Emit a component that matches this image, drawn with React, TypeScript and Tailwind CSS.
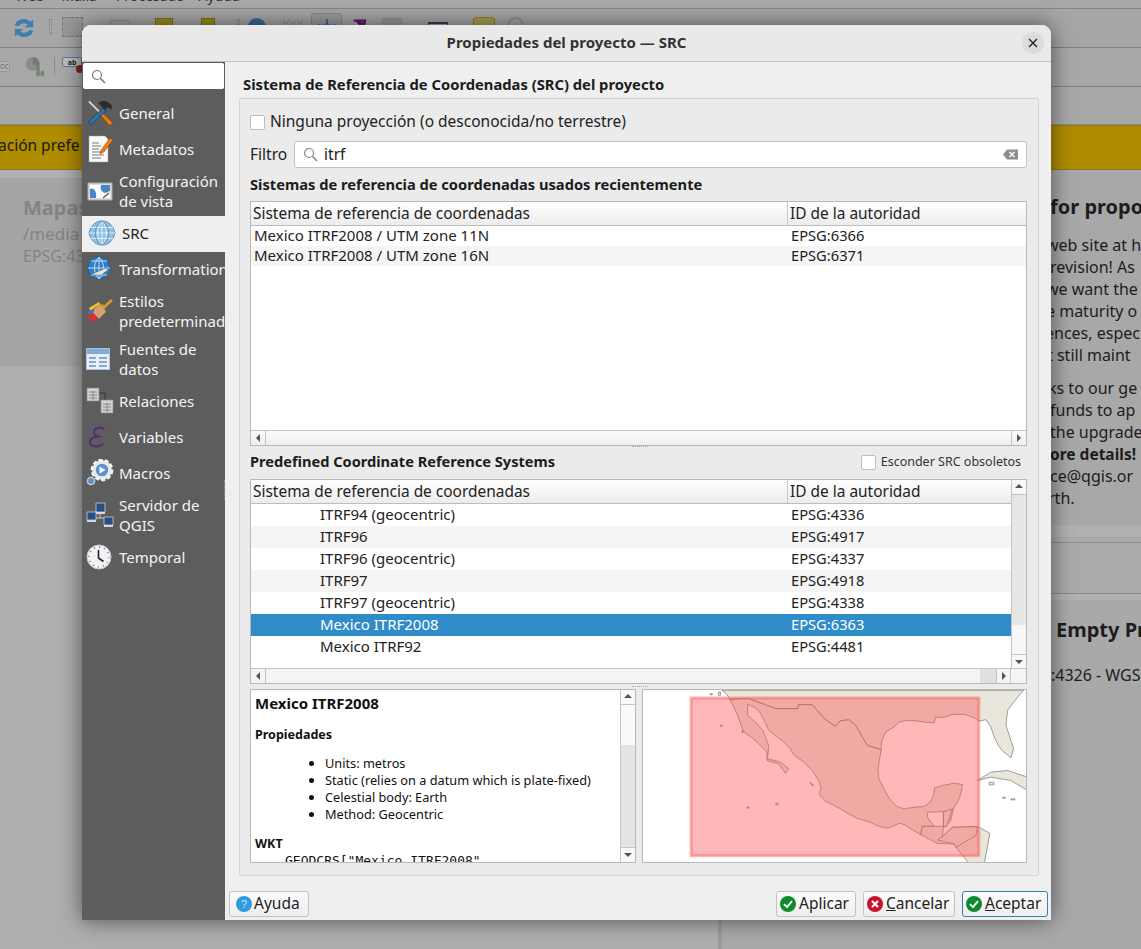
import React from 'react';

const recentRows = [
  ['Mexico ITRF2008 / UTM zone 11N', 'EPSG:6366'],
  ['Mexico ITRF2008 / UTM zone 16N', 'EPSG:6371'],
];

const predefinedRows = [
  ['ITRF94 (geocentric)', 'EPSG:4336'],
  ['ITRF96', 'EPSG:4917'],
  ['ITRF96 (geocentric)', 'EPSG:4337'],
  ['ITRF97', 'EPSG:4918'],
  ['ITRF97 (geocentric)', 'EPSG:4338'],
  ['Mexico ITRF2008', 'EPSG:6363'],
  ['Mexico ITRF92', 'EPSG:4481'],
];

function Hammer() {
  return (
    <svg width="28" height="28" viewBox="0 0 28 28">
      <path d="M2 3l1.5-1.5L16 14l-1.5 1.5z" fill="#d8d8d8" stroke="#555" strokeWidth=".4" />
      <path d="M14 15.5l2-2 10 9.5c1 2-1 4-3 3z" fill="#ee7a12" stroke="#7a3a00" strokeWidth=".6" />
      <path d="M17 9L2 23l3 3L20 12z" fill="#2f6fa8" stroke="#12324f" strokeWidth=".6" />
      <path d="M12 4c4-3 10-3 14 3l-1 4-3-3-3 3-5-5z" fill="#2c2c2c" />
    </svg>
  );
}

function Notepad() {
  return (
    <svg width="28" height="28" viewBox="0 0 28 28">
      <path d="M3 1h16l3 3v23H3z" fill="#fafafa" stroke="#999" strokeWidth=".5" />
      <path d="M6 8h7M6 11h9M6 14h7M6 17h9M6 20h12M6 23h9" stroke="#777" strokeWidth="1" />
      <path d="M24 3l3 2-9 12-4 2 1-4z" fill="#ef7f1a" stroke="#8a4100" strokeWidth=".5" />
    </svg>
  );
}

function MapFrame() {
  return (
    <svg width="28" height="28" viewBox="0 0 28 28">
      <path d="M2 6h24v17H2z" fill="#ddd" stroke="#aaa" />
      <path d="M4 8h20v13H4z" fill="#fdfdfd" />
      <path d="M4 12c4-2 7 3 6 9H4zM15 8h9v6c-3 1-5 3-7 1-2-1-3-4-2-7z" fill="#4a86c6" />
      <path d="M17 21l6-5" stroke="#555" strokeWidth="1.4" />
    </svg>
  );
}

function WireGlobe() {
  return (
    <svg width="28" height="26" viewBox="0 0 28 26">
      <path d="M1 13C3 5 8 1 14 1s11 4 13 12c-2 8-7 12-13 12S3 21 1 13z" fill="#8fc0e6" stroke="#5d8eb6" />
      <path d="M1 13h26M3 7.5h22M3 18.5h22M14 1v24M14 1C8 7 8 19 14 25M14 1c6 6 6 18 0 24" fill="none" stroke="#dff0fb" strokeWidth="1" />
      <path d="M14 1C5 7 5 19 14 25M14 1c9 6 9 18 0 24" fill="none" stroke="#4c7fa8" strokeWidth=".7" />
    </svg>
  );
}

function ArrowGlobe() {
  return (
    <svg width="26" height="26" viewBox="0 0 26 26">
      <circle cx="13" cy="12" r="11" fill="#2f7fc6" stroke="#1f5c94" />
      <path d="M2 12h22M13 1v22M5 5h16M5 19h16M13 1C7 7 7 17 13 23M13 1c6 6 6 16 0 22" fill="none" stroke="#cfe6f7" strokeWidth=".9" />
      <path d="M6 18l14-6 2 2-7 5H8z" fill="#e6e6e6" stroke="#555" strokeWidth=".5" />
    </svg>
  );
}

function Brush() {
  return (
    <svg width="28" height="26" viewBox="0 0 28 26">
      <path d="M3 10l10-6 4 8-10 7z" fill="#e8c81c" />
      <path d="M1 14l8-4 4 6-7 4z" fill="#3f6fc4" />
      <path d="M1 18l6-3 5 5-5 4z" fill="#d43232" />
      <path d="M9 9l8-3 3 8-7 7-6-6z" fill="#d8a070" stroke="#8a6238" strokeWidth=".5" />
      <path d="M17 10L26 2" stroke="#d99a1e" strokeWidth="2.6" />
    </svg>
  );
}

function DataTable() {
  return (
    <svg width="24" height="22" viewBox="0 0 24 22">
      <path d="M.5.5h23v21H.5z" fill="#e8f1fa" stroke="#a9c4df" />
      <path d="M1 1h22v5H1z" fill="#7fabd6" />
      <path d="M3 9h7v2H3zM13 9h8v2h-8zM3 13h7v2H3zM13 13h8v2h-8zM3 17h7v2H3zM13 17h8v2h-8z" fill="#86a9cc" />
    </svg>
  );
}

function Relations() {
  return (
    <svg width="28" height="28" viewBox="0 0 28 28">
      <path d="M13 6h6v8" fill="none" stroke="#2a3a55" strokeWidth="1" />
      <path d="M1 1h12v13H1zM15 13h12v13H15z" fill="#d2d2d2" stroke="#8a8a8a" strokeWidth=".7" />
      <path d="M3 5h8M3 8h8M3 11h8M17 17h8M17 20h8M17 23h8M7 4v9M21 16v9" stroke="#777" strokeWidth=".8" />
    </svg>
  );
}

function Epsilon() {
  return (
    <svg width="24" height="24" viewBox="0 0 24 24">
      <path d="M18 4c-5-2.5-10-1-10 3 0 3 3 4.500 6 4.500-5 0-10 1.500-10 5.500 0 5 8 6 13 2" fill="none" stroke="#5b2a78" strokeWidth="2.2" />
      <path d="M7 11.5h9" stroke="#5b2a78" strokeWidth="1" />
    </svg>
  );
}

function Gears() {
  return (
    <svg width="28" height="28" viewBox="0 0 28 28">
      <circle cx="16" cy="11" r="10" fill="#e4e4e4" stroke="#f4f4f4" strokeWidth="2.6" strokeDasharray="4 2.2" />
      <circle cx="16" cy="11" r="7" fill="#5b93cf" stroke="#eee" strokeWidth="1.4" />
      <path d="M13.5 7.5l6 3.5-6 3.5z" fill="#fff" />
      <circle cx="5" cy="22" r="3.6" fill="#5b93cf" stroke="#ccc" strokeWidth="1.4" />
    </svg>
  );
}

function Servers() {
  return (
    <svg width="28" height="26" viewBox="0 0 28 26">
      <path d="M14 10v6M6 16h16" stroke="#ccc" strokeWidth="1" />
      <path d="M10 1h9v9h-9zM1 10h9v8H1zM18 15h9v8h-9z" fill="#234f86" stroke="#cfcfcf" strokeWidth=".8" />
      <path d="M10 10h9v2h-9zM1 18h9v2H1zM18 23h9v2h-9z" fill="#d8d8d8" />
    </svg>
  );
}

function Clock() {
  return (
    <svg width="26" height="26" viewBox="0 0 26 26">
      <circle cx="13" cy="13" r="12" fill="#f2f2f2" stroke="#c8c8c8" />
      <circle cx="13" cy="13" r="10" fill="none" stroke="#4e8fd1" strokeWidth="1.4" strokeDasharray="1.3 3.9" />
      <path d="M12.5 6v8l5 3.5" fill="none" stroke="#222" strokeWidth="1.6" />
    </svg>
  );
}

const sidebarItems: { label: string[]; icon: React.ReactNode; active?: boolean }[] = [
  { label: ['General'], icon: <Hammer /> },
  { label: ['Metadatos'], icon: <Notepad /> },
  { label: ['Configuración', 'de vista'], icon: <MapFrame /> },
  { label: ['SRC'], icon: <WireGlobe />, active: true },
  { label: ['Transformations'], icon: <ArrowGlobe /> },
  { label: ['Estilos', 'predeterminados'], icon: <Brush /> },
  { label: ['Fuentes de', 'datos'], icon: <DataTable /> },
  { label: ['Relaciones'], icon: <Relations /> },
  { label: ['Variables'], icon: <Epsilon /> },
  { label: ['Macros'], icon: <Gears /> },
  { label: ['Servidor de', 'QGIS'], icon: <Servers /> },
  { label: ['Temporal'], icon: <Clock /> },
];

function Search({ color = '#777' }: { color?: string }) {
  return (
    <svg width="15" height="15" viewBox="0 0 15 15" fill="none">
      <circle cx="6" cy="6" r="4.5" stroke={color} strokeWidth="1.2" />
      <path d="M9.5 9.5l4.5 4.5" stroke={color} strokeWidth="1.6" />
    </svg>
  );
}

function ArrowButton({ dir, className }: { dir: 'up' | 'down' | 'left' | 'right'; className: string }) {
  const points = {
    up: '1,6 5,2 9,6',
    down: '1,3 5,7 9,3',
    left: '7,1 3,5 7,9',
    right: '3,1 7,5 3,9',
  }[dir];
  return (
    <div className={`flex shrink-0 items-center justify-center ${className}`}>
      <svg width="10" height="10" viewBox="0 0 10 10">
        <polygon points={points} fill="#555" />
      </svg>
    </div>
  );
}

function Checkbox() {
  return <div className="h-[15px] w-[15px] shrink-0 rounded-[2px] border border-[#bdbdbd] bg-white" />;
}

function TableHeader() {
  return (
    <div className="flex h-[24px] shrink-0 items-center border-b border-[#bdbdbd] bg-gradient-to-b from-white to-[#ececec] text-[15.45px] text-[#222]">
      <div className="flex h-full w-[537px] shrink-0 items-center border-r border-[#c8c8c8] pl-[2px]">Sistema de referencia de coordenadas</div>
      <div className="pl-[2px]">ID de la autoridad</div>
    </div>
  );
}

function RoundIcon({ kind }: { kind: 'ok' | 'no' | 'help' }) {
  const bg = { ok: '#108a2c', no: '#c8132f', help: '#319bdd' }[kind];
  return (
    <svg width="16" height="16" viewBox="0 0 16 16" className="shrink-0">
      <circle cx="8" cy="8" r="8" fill={bg} />
      {kind === 'ok' && <path d="M4 8.2l3 3 5-6" fill="none" stroke="#fff" strokeWidth="1.9" />}
      {kind === 'no' && <path d="M5 5l6 6M11 5l-6 6" fill="none" stroke="#fff" strokeWidth="1.9" />}
      {kind === 'help' && (
        <text x="8" y="12" textAnchor="middle" fontSize="11" fill="#cfe8f8" fontFamily="Liberation Sans, sans-serif">
          ?
        </text>
      )}
    </svg>
  );
}

function DialogButton({ kind, className, accent, children }: { kind: 'ok' | 'no' | 'help'; className: string; accent?: boolean; children: React.ReactNode }) {
  return (
    <button
      className={`flex h-[26px] items-center rounded-[3px] border bg-gradient-to-b from-[#fbfbfb] to-[#eeeeee] text-[15.5px] text-[#222] ${
        accent ? 'border-[#3a80ac]' : 'border-[#c2c2c2]'
      } ${className}`}
    >
      <RoundIcon kind={kind} />
      <span className="pb-px">{children}</span>
    </button>
  );
}

function MapPreview() {
  return (
    <svg width="385" height="174" viewBox="9 30 1152 519" className="block">
      <rect x="9" y="30" width="1152" height="519" fill="#fff" />
      <g fill="#e9e7dc" stroke="#66665c" strokeWidth="1.8" strokeLinejoin="round">
        <path d="M245 30L258 40 270 58 322 54 407 85 472 85 475 73 515 73 555 118 585 138 598 122 625 118 645 135 680 195 722 208 722 185 735 155 760 140 775 125 800 120 830 122 850 125 880 128 885 110 905 112 935 102 970 102 1000 112 1015 122 1035 118 1050 140 1060 170 1072 195 1085 212 1110 232 1118 205 1105 165 1095 135 1100 90 1130 50 1148 30z" />
        <path d="M270 58L322 54 407 85 472 85 475 73 515 73 555 118 585 138 598 122 625 118 645 135 680 195 722 208 717 235 712 270 715 295 735 335 750 360 770 378 790 385 820 380 850 378 868 365 878 345 882 322 905 315 940 308 965 312 960 340 950 365 940 378 935 395 930 420 915 437 908 437 908 393 860 395 860 410 880 437 845 437 840 462 815 447 790 432 775 428 755 438 738 443 710 435 690 425 650 413 625 400 600 385 575 372 555 362 535 340 542 325 535 300 515 270 490 245 460 222 450 205 430 185 405 165 385 150 372 120 358 95 345 82 322 72 322 105 345 125 368 150 385 195 382 235 420 245 445 265 435 278 415 250 380 240 380 215 340 175 310 155 290 100z" />
        <path d="M840 462L845 437 880 437 908 437 905 468 935 440 1010 438 1047 458 1030 549 985 549 950 505 940 490 890 488z" />
        <path d="M908 393L935 385 918 437 908 437z" />
        <path d="M905 468L890 478 940 490 945 500 970 485 1005 465 1010 438 935 440z" />
        <path d="M1010 300L1050 275 1100 270 1160 290 1160 330 1110 300 1050 290z" />
        <path d="M1045 305h14v8h-14zM508 305l12 10-4 1zM405 370l8-2-1 6zM240 134h6v4h-6zM305 152h4v4h-4zM210 40h6v4h-6zM235 35h6v10h-6zM320 380h6v3h-6zM1085 350h8v3h-8zM1110 355h12v3h-12z" />
      </g>
      <rect x="153" y="53" width="861" height="472" fill="#ff4d4d" fillOpacity=".4" stroke="#ff5555" strokeOpacity=".45" strokeWidth="9" />
    </svg>
  );
}

function Toolbar() {
  return (
    <div className="flex h-[39px] items-start border-b border-[#7f7f7f] bg-[#a6a6a6]">
      <svg width="22" height="22" viewBox="7 6 22 24" className="ml-[13px] mt-[9px] shrink-0">
        <path d="M8 14a10 9 0 0 1 17-4l3-2v8h-9l3-3a7 6 0 0 0-10 2zM28 20a10 9 0 0 1-17 4l-3 2v-8h9l-3 3a7 6 0 0 0 10-2z" fill="#3c7fae" />
      </svg>
      <div className="ml-[14px] mt-[10px] h-[16px] w-[3px] border-x border-dotted border-[#7e7e7e]" />
      <div className="ml-[10px] mt-[8px] h-[20px] w-[21px] border border-dashed border-[#777] bg-[#989898]" />
      <div className="ml-[27px] mt-[11px] h-[12px] w-[20px] border border-[#8a8a8a]" />
      <div className="ml-[25px] mt-[9px] h-[16px] w-[18px] border border-[#7d7118] bg-[#9a8c1f]" />
      <div className="ml-[28px] mt-[9px] h-[16px] w-[14px] border border-[#7d7118] bg-[#9a8c1f]" />
      <div className="ml-[22px] mt-[10px] h-[12px] w-[3px] border-x border-dotted border-[#7e7e7e]" />
      <div className="ml-[8px] mt-[9px] h-[18px] w-[18px] rounded-full bg-[#3a6a98]" />
      <svg width="20" height="10" viewBox="0 0 22 10" className="ml-[17px] mt-[9px] shrink-0">
        <path d="M1 1v8M21 1v8M1 5h20" stroke="#8a8a8a" />
        <circle cx="7" cy="5" r="2.4" fill="#a6a6a6" stroke="#8a8a8a" />
        <circle cx="15" cy="5" r="2.4" fill="#a6a6a6" stroke="#8a8a8a" />
      </svg>
      <div className="ml-[8px] mt-[4px] flex h-[24px] w-[31px] shrink-0 items-start justify-center rounded-[3px] border border-[#888] bg-[#9c9c9c] pt-[4px]">
        <svg width="20" height="14" viewBox="0 0 20 14">
          <path d="M10 1v6M2 7c3 2 4 0 8 0s5 2 8 0c0 3-3 6-8 6S2 10 2 7z" fill="#3f6c9a" stroke="#3f6c9a" strokeWidth="2" />
        </svg>
      </div>
      <svg width="14" height="14" viewBox="0 0 16 16" className="ml-[10px] mt-[9px] shrink-0">
        <path d="M2 3h13l-1 4-7-2 4 5-6 5" fill="none" stroke="#5d1462" strokeWidth="2.6" />
      </svg>
      <div className="ml-[16px] mt-[9px] h-[12px] w-[20px] border border-[#8e8e8e] bg-[#999]" />
      <div className="ml-[26px] mt-[13px] h-[8px] w-[20px] border-x border-t-2 border-x-[#2d3d4f] border-t-[#2d3d4f]" />
      <div className="ml-[25px] mt-[8px] h-[18px] w-[22px] rounded-[3px] border border-[#8d7d20] bg-[#a89f55]" />
      <div className="ml-[12px] mt-[8px] h-[17px] w-[17px] rounded-full border-2 border-[#8e8e8e]" />
    </div>
  );
}

function SecondToolbar() {
  return (
    <div className="flex h-[39px] items-center border-b border-[#7f7f7f] bg-[#a8a8a8] pb-[2px]">
      <div className="flex h-[11px] w-[10px] items-center border border-l-0 border-[#999] bg-[#b3b3a8] text-[8px] text-[#777]">oc</div>
      <svg width="21" height="21" viewBox="0 0 22 24" className="ml-[14px] shrink-0">
        <circle cx="9" cy="9" r="8" fill="#8d8d8d" />
        <path d="M9 9V1a8 8 0 0 1 7 11z" fill="#6f7f6f" />
        <path d="M13 12h4v11h-4z" fill="#6c8a6c" />
        <path d="M18 17h4v6h-4z" fill="#7f7f7f" />
      </svg>
      <div className="ml-[9px] h-[18px] w-px bg-[#888]" />
      <div className="relative ml-[7px] h-[18px] w-[22px] shrink-0">
        <div className="flex h-[10px] w-[20px] items-center justify-center rounded-[2px] border border-[#557aa0] bg-[#bcbcbc] text-[7px] font-bold leading-none text-[#222]">ab</div>
        <div className="absolute left-[14px] top-[8px] h-[8px] w-[8px] rounded-full bg-[#8a1f1f]" />
      </div>
    </div>
  );
}

function BackgroundPage() {
  return (
    <div className="flex h-[949px] w-[1141px] flex-col overflow-hidden bg-[#adadad] text-[#1d1d1d]">
      <div className="h-[9px] overflow-hidden border-b border-[#858585] bg-[#a8a8a8]">
        <div className="-mt-[15px] flex pl-[15px] text-[14px] text-[#333]">
          <span>Web</span>
          <span className="ml-[17px]">Malla</span>
          <span className="ml-[19px]">Procesado</span>
          <span className="ml-[14px]">Ayuda</span>
        </div>
      </div>
      <Toolbar />
      <SecondToolbar />
      <div className="h-[38px] border-b border-[#8a8a8a] bg-[#a8a8a8]" />
      <div className="flex h-[45px] items-center overflow-hidden border-y border-[#8a7a20] bg-[#b08c00] pb-[3px] text-[15.5px] text-[#1a1a1a]">
        <span className="-ml-[2px] whitespace-nowrap">ación prefe</span>
      </div>
      <div className="flex flex-1">
        <div className="flex w-[718px] flex-col">
          <div className="h-[8px] bg-[#b0b0b0]" />
          <div className="h-[188px] bg-[#a5a5a5] pl-[23px] pt-[16px] text-[#848484]">
            <div className="text-[20px] font-bold leading-[28px]">Mapas</div>
            <div className="text-[17px] leading-[23px]">/media</div>
            <div className="text-[16px] leading-[22px]">EPSG:43</div>
          </div>
          <div className="flex-1 bg-[#aeaeae]" />
        </div>
        <div className="w-[4px] bg-[#9c9c9c]" />
        <div className="flex flex-1 flex-col overflow-hidden">
          <div className="h-[355px] whitespace-nowrap bg-[#a8a8a8] pl-[329px] pt-[23px] text-[16px] leading-[22px]">
            <div className="-ml-[1px] h-[41px] text-[20px] font-bold leading-[28px]">for propo</div>
            <div className="-ml-[5px]">web site at h</div>
            <div className="-ml-[1px]">revision! As</div>
            <div className="-ml-[5px]">we want the</div>
            <div className="-ml-[5px]">e maturity o</div>
            <div className="-ml-[6px]">ences, espec</div>
            <div className="-ml-[4px]">t still maint</div>
            <div className="-ml-[3px] mt-[11px]">ks to our ge</div>
            <div className="-ml-[1px]">funds to ap</div>
            <div className="-ml-[1px]">the upgrade</div>
            <div className="-ml-[1px] text-[15.5px] font-bold">ore details!</div>
            <div className="-ml-[1px]">ce@qgis.or</div>
            <div className="-ml-[3px]">rth.</div>
          </div>
          <div className="h-[12px] bg-[#b0b0b0]" />
          <div className="h-[5px] bg-[#aaaaaa]" />
          <div className="h-[52px] border-y border-[#8b8b8b] bg-[#aaaaaa]" />
          <div className="h-[6px] bg-[#b0b0b0]" />
          <div className="flex-1 whitespace-nowrap bg-[#a9a9a9] pl-[334px] pt-[16px]">
            <div className="text-[20px] font-bold leading-[28px]">Empty Pr</div>
            <div className="-ml-[5px] mt-[20px] text-[16px] leading-[22px]">:4326 - WGS</div>
          </div>
        </div>
      </div>
    </div>
  );
}

function Sidebar() {
  return (
    <div className="relative flex w-[143px] shrink-0 flex-col bg-[#5d5d5d]">
      <div className="h-[34px] px-px pt-px">
        <div className="flex h-[26px] items-center rounded-[2px] bg-white pl-[8px]">
          <Search />
        </div>
      </div>
      {sidebarItems.map((item) => (
        <div
          key={item.label[0]}
          className={`relative flex items-center overflow-hidden whitespace-nowrap pb-[2px] text-[15px] leading-[20px] ${
            item.label.length > 1 ? 'h-[48px]' : 'h-[36px]'
          } ${item.active ? 'bg-[#efefef] pl-[40px] text-[#222]' : 'pl-[37px] text-[#f4f4f4]'}`}
        >
          <div className={`absolute top-1/2 flex -translate-y-1/2 items-center justify-center pb-[2px] ${item.active ? 'left-[6px]' : 'left-[4px]'}`}>{item.icon}</div>
          <div>
            {item.label.map((line) => (
              <div key={line}>{line}</div>
            ))}
          </div>
        </div>
      ))}
      <div className="flex-1" />
    </div>
  );
}

function RecentTable() {
  return (
    <div className="flex h-[245px] shrink-0 flex-col border border-[#b8b8b8] bg-white text-[15px] text-[#222]">
      <TableHeader />
      <div className="flex-1">
        {recentRows.map(([name, id], i) => (
          <div key={id} className={`flex h-[20px] items-center pb-[2px] ${i % 2 ? 'bg-[#f5f5f5]' : 'bg-white'}`}>
            <div className="w-[537px] pl-[3px]">{name}</div>
            <div className="pl-[3px] text-[14.7px]">{id}</div>
          </div>
        ))}
      </div>
      <div className="flex h-[15px] shrink-0 border-t border-[#c4c4c4] bg-gradient-to-b from-[#fafafa] to-[#efefef]">
        <ArrowButton dir="left" className="w-[15px] border-r border-[#c4c4c4]" />
        <div className="flex-1" />
        <ArrowButton dir="right" className="w-[15px] border-l border-[#c4c4c4]" />
      </div>
    </div>
  );
}

function PredefinedTable() {
  return (
    <div className="flex h-[205px] shrink-0 flex-col border border-[#b8b8b8] bg-white text-[15px] text-[#222]">
      <div className="flex min-h-0 flex-1">
        <div className="flex min-w-0 flex-1 flex-col">
          <TableHeader />
          {predefinedRows.map(([name, id], i) => (
            <div
              key={id}
              className={`flex h-[22px] shrink-0 items-center pb-[2px] ${i === 5 ? 'bg-[#2f8cc8] text-white' : i % 2 ? 'bg-[#f5f5f5]' : 'bg-white'}`}
            >
              <div className="w-[537px] pl-[69px]">{name}</div>
              <div className="pl-[3px] text-[14.7px]">{id}</div>
            </div>
          ))}
        </div>
        <div className="flex w-[15px] shrink-0 flex-col border-l border-[#c4c4c4]">
          <ArrowButton dir="up" className="h-[15px] border-b border-[#c4c4c4] bg-[#f8f8f8]" />
          <div className="h-[130px] bg-[#e6e6e6]" />
          <div className="flex-1 bg-[#f6f6f6]" />
          <ArrowButton dir="down" className="h-[14px] border-t border-[#c4c4c4] bg-[#f8f8f8]" />
        </div>
      </div>
      <div className="flex h-[15px] shrink-0 border-t border-[#c4c4c4] bg-[#f4f4f4]">
        <ArrowButton dir="left" className="w-[15px] border-r border-[#c4c4c4]" />
        <div className="flex-1" />
        <div className="w-[16px] bg-[#e0e0e0]" />
        <ArrowButton dir="right" className="w-[15px] border-x border-[#c4c4c4]" />
        <div className="w-[15px]" />
      </div>
    </div>
  );
}

function DetailsPanel() {
  return (
    <div className="flex w-[386px] shrink-0 border border-[#b8b8b8] bg-white text-[#111]">
      <div className="min-w-0 flex-1 overflow-hidden pl-[4px] pt-[3px]">
        <div className="text-[15px] font-bold leading-[20px]">Mexico ITRF2008</div>
        <div className="mt-[13px] text-[12.5px] font-bold leading-[17px]">Propiedades</div>
        <ul className="mt-[12px] list-disc pl-[70px] text-[12.75px] leading-[17px]">
          <li>Units: metros</li>
          <li>Static (relies on a datum which is plate-fixed)</li>
          <li>Celestial body: Earth</li>
          <li>Method: Geocentric</li>
        </ul>
        <div className="mt-[12px] text-[12.5px] font-bold leading-[17px]">WKT</div>
        <div className="mt-[1px] whitespace-pre pl-[30px] font-['DejaVu_Sans_Mono',monospace] text-[13px] leading-[16px]">GEODCRS["Mexico ITRF2008",</div>
      </div>
      <div className="flex w-[15px] shrink-0 flex-col border-l border-[#c4c4c4]">
        <ArrowButton dir="up" className="h-[15px] border-b border-[#c4c4c4] bg-[#f8f8f8]" />
        <div className="h-[40px] bg-[#fafafa]" />
        <div className="flex-1 bg-[#e4e4e4]" />
        <ArrowButton dir="down" className="h-[15px] border-t border-[#c4c4c4] bg-[#f8f8f8]" />
      </div>
    </div>
  );
}

function Dialog() {
  return (
    <div className="absolute left-[82px] top-[25px] flex h-[895px] w-[969px] flex-col overflow-hidden rounded-t-[9px] bg-[#efefef] font-['Noto_Sans',sans-serif] shadow-[0_0_22px_rgba(0,0,0,0.55)]">
      <div className="relative flex h-[37px] shrink-0 items-center justify-center border-b border-[#bfbfbf] bg-[#e9e9e9] pb-[2px] text-[15px] font-bold text-[#333]">
        Propiedades del proyecto — SRC
        <div className="absolute right-[7px] top-[7px] flex h-[22px] w-[22px] items-center justify-center rounded-full bg-[#dcdcdc]">
          <svg width="10" height="10" viewBox="0 0 10 10">
            <path d="M1 1l8 8M9 1l-8 8" stroke="#222" strokeWidth="1.4" />
          </svg>
        </div>
      </div>
      <div className="flex min-h-0 flex-1">
        <Sidebar />
        <div className="relative flex min-w-0 flex-1 flex-col">
          <div className="absolute -left-[1px] top-[418px] h-[20px] w-[3px] border-l border-dotted border-[#999]" />
          <div className="flex h-[36px] shrink-0 items-center pl-[18px] pt-[8px] text-[14.75px] font-bold text-[#1c1c1c]">
            Sistema de Referencia de Coordenadas (SRC) del proyecto
          </div>
          <div className="ml-[14px] mr-[12px] flex h-[778px] flex-col rounded-[2px] border border-[#d2d2d2] bg-[#ebebeb] pl-[10px] pr-[11px] pt-[9px] text-[#222]">
            <div className="flex h-[26px] items-center gap-[5px] pt-[2px] text-[15.5px]">
              <Checkbox />
              Ninguna proyección (o desconocida/no terrestre)
            </div>
            <div className="mt-[7px] flex h-[27px] items-center gap-[7px] text-[15.5px]">
              Filtro
              <div className="flex h-full flex-1 items-center rounded-[3px] border border-[#c2c2c2] bg-white pl-[8px] pr-[8px]">
                <Search color="#888" />
                <span className="ml-[6px] flex-1">itrf</span>
                <svg width="15" height="11" viewBox="0 0 15 11">
                  <path d="M0 5.5L4 .5h11v10H4z" fill="#8e8e8e" />
                  <path d="M6.5 3l5 5M11.5 3l-5 5" stroke="#fff" strokeWidth="1.4" />
                </svg>
              </div>
            </div>
            <div className="flex h-[33px] shrink-0 items-center text-[14.66px] font-bold text-[#1c1c1c]">
              Sistemas de referencia de coordenadas usados recientemente
            </div>
            <RecentTable />
            <div className="relative flex h-[33px] shrink-0 items-center justify-between pb-[2px] pr-[6px] text-[14.6px] font-bold text-[#1c1c1c]">
              Predefined Coordinate Reference Systems
              <div className="flex items-center gap-[5px] pt-[1px] text-[12.5px] font-normal text-[#333]">
                <Checkbox />
                Esconder SRC obsoletos
              </div>
              <div className="absolute left-[382px] top-0 h-px w-[16px] border-t border-dotted border-[#aaa]" />
            </div>
            <PredefinedTable />
            <div className="relative mt-[5px] flex h-[174px] shrink-0 gap-[6px]">
              <div className="absolute -top-[3px] left-[382px] h-px w-[16px] border-t border-dotted border-[#aaa]" />
              <DetailsPanel />
              <div className="flex-1 overflow-hidden border border-[#b8b8b8] bg-white">
                <MapPreview />
              </div>
            </div>
          </div>
          <div className="flex flex-1 items-start justify-between pl-[4px] pr-[3px] pt-[15px]">
            <DialogButton kind="help" className="w-[80px] gap-[2px] pl-[6px]">Ayuda</DialogButton>
            <div className="flex gap-[7px]">
              <DialogButton kind="ok" className="w-[80px] gap-[3px] pl-[3px]">Aplicar</DialogButton>
              <DialogButton kind="no" className="w-[92px] gap-[3px] pl-[3px]"><span className="underline">C</span>ancelar</DialogButton>
              <DialogButton kind="ok" accent className="w-[86px] gap-[3px] pl-[3px]"><span className="underline">A</span>ceptar</DialogButton>
            </div>
          </div>
        </div>
      </div>
    </div>
  );
}

export default function App() {
  return (
    <div className="relative h-[949px] w-[1141px] overflow-hidden font-['Noto_Sans',sans-serif]">
      <BackgroundPage />
      <Dialog />
    </div>
  );
}
